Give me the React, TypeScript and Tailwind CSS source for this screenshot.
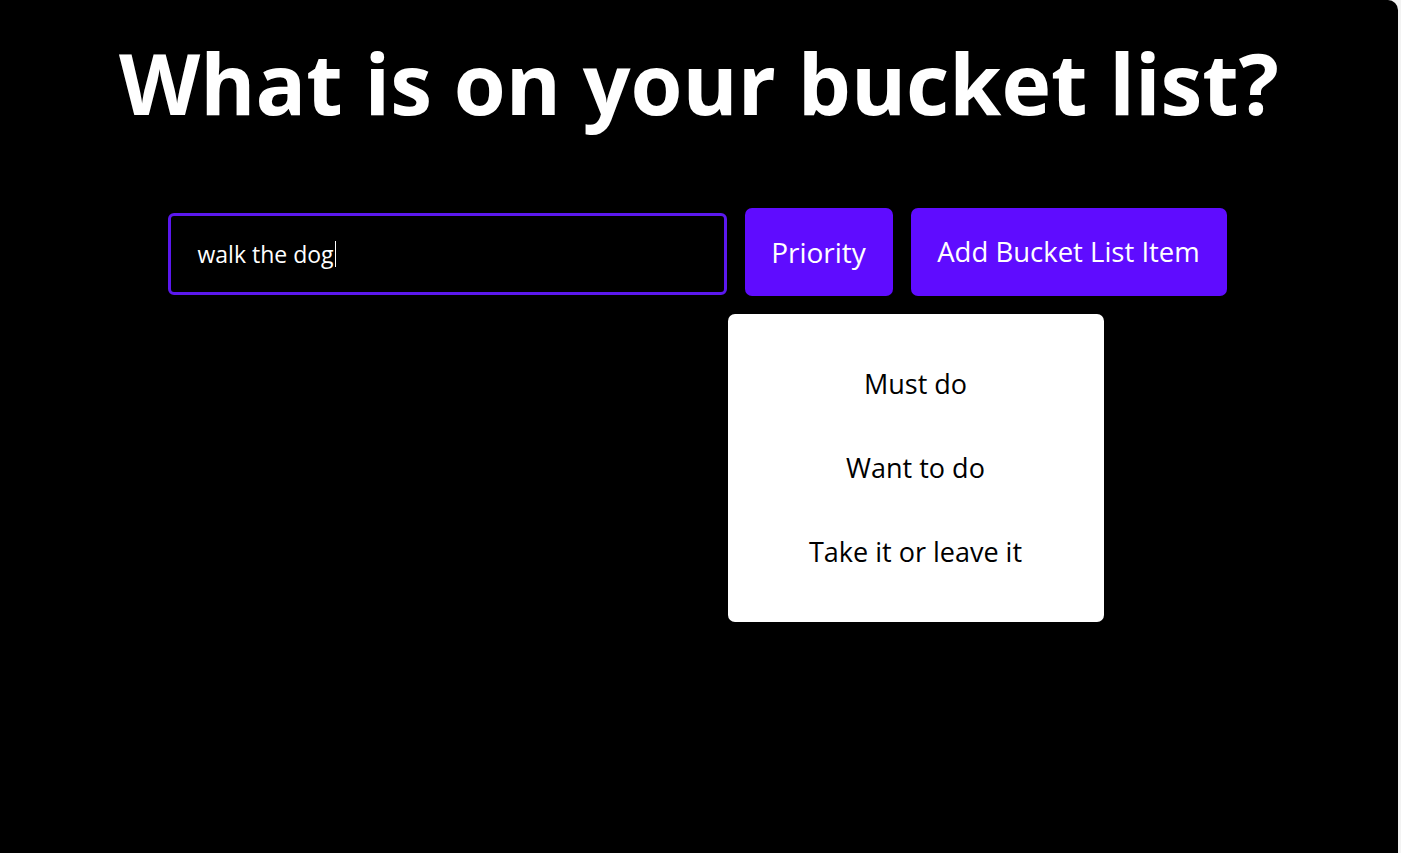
export default function App() {
	return (
		<div className="flex min-h-[853px] w-full bg-[#f3f3f3]" style={{ fontFamily: '"Open Sans", sans-serif' }}>
			<div className="flex min-h-[853px] w-[1398px] flex-col items-center rounded-tr-[10px] bg-black">
				<h1 className="mt-[33px] text-[84px] font-bold leading-[1.2] text-white">
					What is on your bucket list?
				</h1>

				<div className="mr-[4px] mt-[74px] flex items-center gap-[18px]">
					<div className="mt-[4px] flex h-[82px] w-[559px] items-center rounded-[6px] border-[3px] border-[#5b18ee] pl-[27px]">
						<span className="text-[23px] text-white">walk the dog</span>
						<span className="ml-[1px] h-[26px] w-px bg-white" />
					</div>

					<div className="relative">
						<button
							type="button"
							className="h-[88px] w-[148px] rounded-[7px] bg-[#5f0cff] text-[28px] text-white"
						>
							Priority
						</button>

						<div className="absolute left-[-17px] top-[106px] flex h-[308px] w-[376px] flex-col items-center rounded-[7px] bg-white pt-[50px] text-[27px] text-black">
							<div className="h-[84px]">Must do</div>
							<div className="h-[84px]">Want to do</div>
							<div className="h-[84px]">Take it or leave it</div>
						</div>
					</div>

					<button
						type="button"
						className="h-[88px] w-[316px] rounded-[7px] bg-[#5f0cff] text-[27.5px] text-white"
					>
						Add Bucket List Item
					</button>
				</div>
			</div>
		</div>
	);
}
